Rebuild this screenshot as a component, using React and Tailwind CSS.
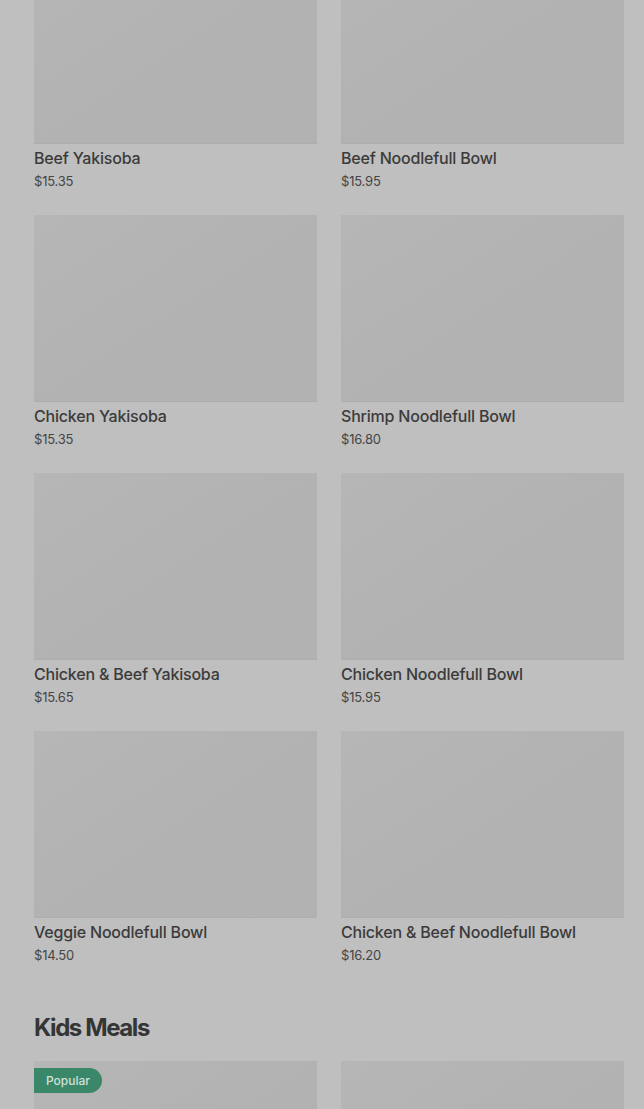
import React from "react";

const bowls = [
  { name: "Beef Yakisoba", price: "$15.35" },
  { name: "Beef Noodlefull Bowl", price: "$15.95" },
  { name: "Chicken Yakisoba", price: "$15.35" },
  { name: "Shrimp Noodlefull Bowl", price: "$16.80" },
  { name: "Chicken & Beef Yakisoba", price: "$15.65" },
  { name: "Chicken Noodlefull Bowl", price: "$15.95" },
  { name: "Veggie Noodlefull Bowl", price: "$14.50" },
  { name: "Chicken & Beef Noodlefull Bowl", price: "$16.20" },
];

function Placeholder({ children }) {
  // loading skeleton, faint shimmer in the top-left corner
  return (
    <div className="relative h-[187px] w-full bg-gradient-to-br from-[#b6b6b6] via-[#b2b2b2] to-[#b2b2b2] border-b border-[#adadad]">
      {children}
    </div>
  );
}

function MenuItem({ item }) {
  return (
    <div className="flex flex-col">
      <Placeholder />
      <div className="mt-[2px] text-[16px] leading-6 font-medium tracking-[-0.2px] text-[#3b3b3b]">{item.name}</div>
      <div className="mt-[1px] text-[13px] leading-5 tracking-[-0.2px] text-[#454545]">{item.price}</div>
    </div>
  );
}

export default function App() {
  return (
    <div
      className="min-h-[1109px] overflow-hidden bg-[#bfbfbf] pl-[34px] pr-[20px]"
      style={{ fontFamily: "Inter, 'Noto Sans', sans-serif" }}
    >
      <div className="-mt-[43px] grid grid-cols-2 gap-x-[24px] gap-y-[24px]">
        {bowls.map((item) => (
          <MenuItem key={item.name} item={item} />
        ))}
      </div>

      <h2 className="mt-[47px] text-[24px] leading-8 font-bold tracking-[-1.4px] text-[#353535]">Kids Meals</h2>

      <div className="mt-[17px] grid grid-cols-2 gap-x-[24px]">
        <Placeholder>
          <span className="absolute left-0 top-[7px] flex h-[25px] w-[68px] items-center rounded-r-full bg-[#3b876a] pl-[12px] text-[12px] font-medium text-[#d0e2da]">
            Popular
          </span>
        </Placeholder>
        <Placeholder />
      </div>
    </div>
  );
}
